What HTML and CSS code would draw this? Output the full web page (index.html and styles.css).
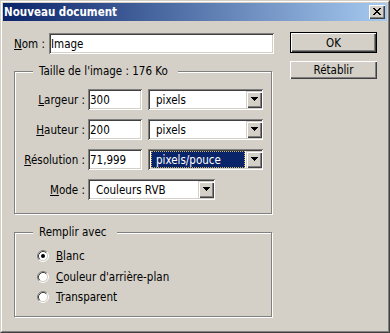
FILE: index.html
```html
<!DOCTYPE html>
<html lang="fr">
<head>
<meta charset="utf-8">
<title>Nouveau document</title>
<link rel="stylesheet" href="styles.css">
</head>
<body>
<div class="window">
  <div class="frame">
    <div class="titlebar">
      <span class="title">Nouveau document</span>
      <div class="close-btn">
        <svg width="8" height="7" viewBox="0 0 8 7"><path fill="#000" d="M0 0h2v1H0zM6 0h2v1H6zM1 1h2v1H1zM5 1h2v1H5zM2 2h4v1H2zM3 3h2v1H3zM2 4h4v1H2zM1 5h2v1H1zM5 5h2v1H5zM0 6h2v1H0zM6 6h2v1H6z"/></svg>
      </div>
    </div>
    <div class="content">
      <div class="left">
        <div class="name-row">
          <label class="name-label"><u>N</u>om :</label>
          <input class="field name-field" type="text" value="Image" readonly>
        </div>

        <fieldset class="group group-size">
          <legend class="legend">Taille de l'image : 176 Ko</legend>
          <div class="rows">
            <div class="row">
              <span class="row-label"><u>L</u>argeur :</span>
              <input class="field num-field" type="text" value="300" readonly>
              <div class="combo unit-combo">
                <span class="combo-value">pixels</span>
                <span class="drop-btn"><svg width="7" height="4" viewBox="0 0 7 4"><path d="M0 0h7v1H0zM1 1h5v1H1zM2 2h3v1H2zM3 3h1v1H3z"/></svg></span>
              </div>
            </div>
            <div class="row">
              <span class="row-label"><u>H</u>auteur :</span>
              <input class="field num-field" type="text" value="200" readonly>
              <div class="combo unit-combo">
                <span class="combo-value">pixels</span>
                <span class="drop-btn"><svg width="7" height="4" viewBox="0 0 7 4"><path d="M0 0h7v1H0zM1 1h5v1H1zM2 2h3v1H2zM3 3h1v1H3z"/></svg></span>
              </div>
            </div>
            <div class="row">
              <span class="row-label"><u>R</u>ésolution :</span>
              <input class="field num-field" type="text" value="71,999" readonly>
              <div class="combo unit-combo">
                <span class="combo-value selected">pixels/pouce</span>
                <span class="drop-btn"><svg width="7" height="4" viewBox="0 0 7 4"><path d="M0 0h7v1H0zM1 1h5v1H1zM2 2h3v1H2zM3 3h1v1H3z"/></svg></span>
              </div>
            </div>
            <div class="row">
              <span class="row-label"><u>M</u>ode :</span>
              <div class="combo mode-combo">
                <span class="combo-value">Couleurs RVB</span>
                <span class="drop-btn"><svg width="7" height="4" viewBox="0 0 7 4"><path d="M0 0h7v1H0zM1 1h5v1H1zM2 2h3v1H2zM3 3h1v1H3z"/></svg></span>
              </div>
            </div>
          </div>
        </fieldset>

        <fieldset class="group group-fill">
          <legend class="legend">Remplir avec</legend>
          <div class="radios">
            <div class="radio-row">
              <svg class="radio" width="12" height="12" viewBox="0 0 12 12">
                <circle cx="6" cy="6" r="4.5" fill="#fff"/>
                <path d="M2.11 9.89A5.5 5.5 0 0 1 9.89 2.11" fill="none" stroke="#808080"/>
                <path d="M9.89 2.11A5.5 5.5 0 0 1 2.11 9.89" fill="none" stroke="#fff"/>
                <path d="M2.82 9.18A4.5 4.5 0 0 1 9.18 2.82" fill="none" stroke="#404040"/>
                <path d="M9.18 2.82A4.5 4.5 0 0 1 2.82 9.18" fill="none" stroke="#d4d0c8"/>
                <circle cx="6" cy="6" r="2" fill="#000"/>
              </svg>
              <span class="radio-label"><u>B</u>lanc</span>
            </div>
            <div class="radio-row">
              <svg class="radio" width="12" height="12" viewBox="0 0 12 12">
                <circle cx="6" cy="6" r="4.5" fill="#fff"/>
                <path d="M2.11 9.89A5.5 5.5 0 0 1 9.89 2.11" fill="none" stroke="#808080"/>
                <path d="M9.89 2.11A5.5 5.5 0 0 1 2.11 9.89" fill="none" stroke="#fff"/>
                <path d="M2.82 9.18A4.5 4.5 0 0 1 9.18 2.82" fill="none" stroke="#404040"/>
                <path d="M9.18 2.82A4.5 4.5 0 0 1 2.82 9.18" fill="none" stroke="#d4d0c8"/>
              </svg>
              <span class="radio-label"><u>C</u>ouleur d'arrière-plan</span>
            </div>
            <div class="radio-row">
              <svg class="radio" width="12" height="12" viewBox="0 0 12 12">
                <circle cx="6" cy="6" r="4.5" fill="#fff"/>
                <path d="M2.11 9.89A5.5 5.5 0 0 1 9.89 2.11" fill="none" stroke="#808080"/>
                <path d="M9.89 2.11A5.5 5.5 0 0 1 2.11 9.89" fill="none" stroke="#fff"/>
                <path d="M2.82 9.18A4.5 4.5 0 0 1 9.18 2.82" fill="none" stroke="#404040"/>
                <path d="M9.18 2.82A4.5 4.5 0 0 1 2.82 9.18" fill="none" stroke="#d4d0c8"/>
              </svg>
              <span class="radio-label"><u>T</u>ransparent</span>
            </div>
          </div>
        </fieldset>
      </div>

      <div class="buttons">
        <div class="btn btn-default">OK</div>
        <div class="btn btn-reset">Rétablir</div>
      </div>
    </div>
  </div>
</div>
</body>
</html>
```

FILE: styles.css
```css
* { box-sizing: border-box; }

html, body {
  margin: 0;
  padding: 0;
  background: #d4d0c8;
}

body {
  font-family: "DejaVu Sans Condensed", "DejaVu Sans", sans-serif;
  font-stretch: condensed;
  font-size: 11.5px;
  color: #000;
}

.window {
  width: 390px;
  height: 333px;
  border: 1px solid;
  border-color: #d4d0c8 #404040 #404040 #d4d0c8;
  background: #d4d0c8;
}

.frame {
  height: 100%;
  border: 1px solid;
  border-color: #fff #808080 #808080 #fff;
  padding: 1px;
}

.titlebar {
  height: 18px;
  display: flex;
  align-items: center;
  justify-content: space-between;
  padding: 0 2px 0 1px;
  background: linear-gradient(to right, #0a246a, #a6caf0);
}

.title {
  color: #fff;
  font-weight: bold;
  font-size: 11.5px;
  line-height: 18px;
}

.close-btn {
  width: 16px;
  height: 14px;
  background: #d4d0c8;
  box-shadow: inset 1px 1px 0 #fff, inset -1px -1px 0 #404040, inset -2px -2px 0 #808080;
  display: flex;
  align-items: center;
  justify-content: center;
  padding: 0 1px 1px 0;
}

.close-btn svg { display: block; }

.content {
  display: flex;
  padding: 11px 0 0 11px;
}

.left {
  width: 261px;
  display: flex;
  flex-direction: column;
}

.name-row {
  display: flex;
  align-items: center;
  height: 21px;
  margin-top: 1px;
}

.name-label {
  width: 35px;
}

.field {
  font-family: "DejaVu Sans Condensed", "DejaVu Sans", sans-serif;
  font-stretch: condensed;
  font-size: 11.5px;
  color: #000;
  background: #fff;
  border: none;
  outline: none;
  margin: 0;
  padding: 0 2px;
  height: 21px;
  box-shadow: inset 1px 1px 0 #808080, inset -1px -1px 0 #fff, inset 2px 2px 0 #404040, inset -2px -2px 0 #d4d0c8;
}

.name-field { width: 225px; }

.group {
  margin: 0;
  padding: 0;
  width: 258px;
  border: 1px solid #808080;
  box-shadow: inset 1px 1px 0 #fff, 1px 1px 0 #fff;
  min-width: 0;
}

.legend {
  margin-left: 18px;
  padding: 0 10px 0 6px;
  background: #d4d0c8;
  line-height: 13px;
}

.group-size { margin-top: 11px; }
.group-fill { margin-top: 12px; }

.rows {
  display: flex;
  flex-direction: column;
  gap: 9px;
  padding: 11px 0 13px 0;
}

.row {
  display: flex;
  align-items: center;
  height: 21px;
}

.row-label {
  width: 70px;
  text-align: right;
  margin-right: 3px;
  white-space: nowrap;
}

.num-field {
  width: 54px;
  margin-right: 6px;
}

.combo {
  height: 21px;
  background: #fff;
  display: flex;
  align-items: stretch;
  padding: 2px 1px 2px 2px;
  box-shadow: inset 1px 1px 0 #808080, inset -1px -1px 0 #fff, inset 2px 2px 0 #404040, inset -2px -2px 0 #d4d0c8;
}

.unit-combo { width: 115px; }
.mode-combo { width: 127px; }

.combo-value {
  flex: 1;
  display: flex;
  align-items: center;
  padding-left: 5px;
  margin: 0 1px;
  white-space: nowrap;
}

.combo-value.selected {
  background: #0a246a;
  color: #fff;
  outline: 1px dotted #c8b060;
  outline-offset: -1px;
}

.drop-btn {
  width: 16px;
  height: 17px;
  background: #d4d0c8;
  box-shadow: inset 1px 1px 0 #d4d0c8, inset 2px 2px 0 #fff, inset -1px -1px 0 #404040, inset -2px -2px 0 #808080;
  display: flex;
  align-items: center;
  justify-content: center;
  padding-bottom: 1px;
}

.drop-btn svg { display: block; }

.radios {
  display: flex;
  flex-direction: column;
  padding: 7px 0 8px 22px;
}

.radio-row {
  display: flex;
  align-items: center;
  height: 20.5px;
}

.radio {
  display: block;
  margin-right: 7px;
}

.buttons {
  margin-left: 15px;
  width: 87px;
  display: flex;
  flex-direction: column;
  gap: 8px;
}

.btn {
  width: 87px;
  display: flex;
  align-items: center;
  justify-content: center;
  background: #d4d0c8;
}

.btn-default {
  height: 21px;
  border: 1px solid #000;
  box-shadow: inset 1px 1px 0 #fff, inset -1px -1px 0 #404040, inset -2px -2px 0 #808080;
}

.btn-reset {
  height: 18px;
  box-shadow: inset 1px 1px 0 #fff, inset -1px -1px 0 #404040, inset -2px -2px 0 #808080;
}
```
